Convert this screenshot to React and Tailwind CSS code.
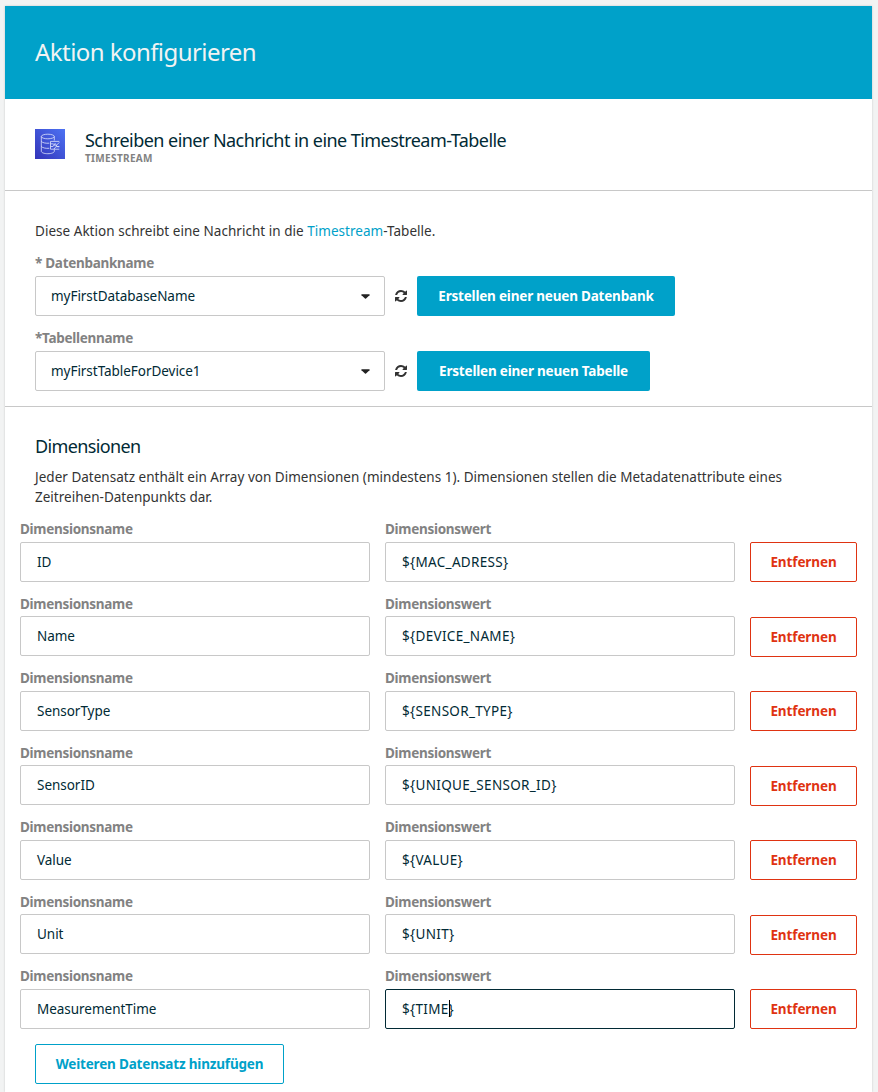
const dimensions = [
  ["ID", "${MAC_ADRESS}"],
  ["Name", "${DEVICE_NAME}"],
  ["SensorType", "${SENSOR_TYPE}"],
  ["SensorID", "${UNIQUE_SENSOR_ID}"],
  ["Value", "${VALUE}"],
  ["Unit", "${UNIT}"],
  ["MeasurementTime", "${TIME}"],
];

function TimestreamIcon() {
  return (
    <svg className="size-[30px] shrink-0" viewBox="0 0 30 30" fill="none" stroke="#dfe4fb" strokeWidth="0.8">
      <defs>
        <linearGradient id="ts" x1="0" y1="1" x2="1" y2="0">
          <stop offset="0" stopColor="#3334b9" />
          <stop offset="1" stopColor="#4d72f3" />
        </linearGradient>
      </defs>
      <rect width="30" height="30" fill="url(#ts)" stroke="none" />
      <ellipse cx="12.8" cy="7.5" rx="6.5" ry="2.3" />
      <path d="M6.3 7.5v14.7c0 1.5 2.9 2.5 6.5 2.5s6.5-1 6.5-2.5v-1.7M19.3 7.5v4" />
      <path d="M6.3 12.3c1 1.5 4.5 2.2 8 1.9M6.3 17.3c1 1.6 4.5 2.3 8 2" />
      <path d="M24.3 12.4h-8.8v7.8h8.8M15.5 14.8l3 .1 2 2.3 3.8-3.8M15.5 17.6l2.6-.2 2-3 2 3.2 2.2.2M19 20l2-2.3 3.3-.2" />
    </svg>
  );
}

function RefreshIcon() {
  return (
    <svg className="mx-[10px] size-3 text-[#333]" viewBox="0 0 1536 1536" fill="currentColor">
      <path d="M1511 928q0 5-1 7-64 268-268 434.5t-478 166.5q-146 0-282.5-55t-243.5-157l-129 129q-19 19-45 19t-45-19-19-45v-448q0-26 19-45t45-19h448q26 0 45 19t19 45-19 45l-137 137q71 66 161 102t187 36q134 0 250-65t186-179q11-17 53-117 8-23 30-23h192q13 0 22.5 9.5t9.5 22.5zm25-800v448q0 26-19 45t-45 19h-448q-26 0-45-19t-19-45 19-45l138-138q-148-137-349-137-134 0-250 65t-186 179q-11 17-53 117-8 23-30 23h-199q-13 0-22.5-9.5t-9.5-22.5v-7q65-268 270-434.5t480-166.5q146 0 284 55.5t245 156.5l130-129q19-19 45-19t45 19 19 45z" />
    </svg>
  );
}

function CaretIcon() {
  return (
    <svg className="h-[5px] w-[9px] text-[#222]" viewBox="0 0 9 5" fill="currentColor">
      <path d="M0.8 0.3h7.4q.8.2.3.9L5 4.5q-.5.4-1 0L.5 1.2Q0 .5.8.3z" />
    </svg>
  );
}

function Label({ children }) {
  return (
    <div className="h-5 text-[13.5px] leading-5 font-bold tracking-[-0.29px] text-[#828282] whitespace-pre">{children}</div>
  );
}

function SelectRow({ label, value, action, actionClass }) {
  return (
    <div>
      <Label>{label}</Label>
      <div className="mt-[3px] flex items-center">
        <div className="flex h-10 w-[350px] items-center justify-between rounded-[2px] border border-[#c8c8c8] pr-[14px] pl-[15px] text-[13.5px] tracking-[-0.04px] text-[#012a35]">
          <span>{value}</span>
          <CaretIcon />
        </div>
        <RefreshIcon />
        <button
          className={
            "h-10 rounded-[2px] bg-[#00a1c9] text-[13.5px] font-bold tracking-[-0.2px] text-white whitespace-nowrap " + actionClass
          }
        >
          {action}
        </button>
      </div>
    </div>
  );
}

function Field({ label, value, textClass, focused }) {
  return (
    <div className="w-[350px]">
      <Label>{label}</Label>
      <div
        className={
          "mt-[2.9px] flex h-10 items-center rounded-[2px] border pl-4 text-[13.5px] text-[#012a35] " +
          textClass +
          (focused ? " border-[#012a35]" : " border-[#c8c8c8]")
        }
      >
        {focused ? (
          <span className="relative">
            {value}
            <span className="absolute top-[1px] right-[4px] h-[17px] w-px bg-black" />
          </span>
        ) : (
          value
        )}
      </div>
    </div>
  );
}

export default function App() {
  return (
    <div className="h-[1092px] w-[878px] overflow-hidden bg-[#f2f3f3] pt-[6px] pl-[5px] font-['Noto_Sans','Open_Sans',sans-serif] text-[#333]">
      <main className="h-[1086px] w-[867px] bg-white shadow-[0_0_2px_rgba(0,0,0,0.18)]">
        <header className="flex h-[93px] items-center bg-[#00a1c9] px-[30px] pb-0.5">
          <h1 className="text-[24px] tracking-[-0.56px] text-[#f2f3f3]">Aktion konfigurieren</h1>
        </header>
        <section className="flex h-[92px] border-b border-[#c8c8c8] px-[30px] pt-[30px]">
          <TimestreamIcon />
          <div className="pl-5">
            <h2 className="text-[18px] leading-[22px] tracking-[-0.55px] text-[#012a35]">
              Schreiben einer Nachricht in eine Timestream-Tabelle
            </h2>
            <div className="text-[10px] leading-[14px] font-bold tracking-[0.34px] text-[#828282]">TIMESTREAM</div>
          </div>
        </section>
        <section className="h-[216px] border-b border-[#c8c8c8] px-[30px] pt-[30px]">
          <p className="mb-3 text-[13.5px] leading-5 tracking-[0.03px]">
            Diese Aktion schreibt eine Nachricht in die <a className="text-[#00a1c9]">Timestream</a>-Tabelle.
          </p>
          <div className="flex flex-col gap-3">
            <SelectRow label="* Datenbankname" value="myFirstDatabaseName" action="Erstellen einer neuen Datenbank" actionClass="w-[258px]" />
            <SelectRow label="*Tabellenname" value="myFirstTableForDevice1" action="Erstellen einer neuen Tabelle" actionClass="w-[233px]" />
          </div>
        </section>
        <section className="pt-7">
          <div className="px-[30px]">
            <h3 className="text-[18px] leading-[22px] tracking-[-0.62px] text-[#012a35]">Dimensionen</h3>
            <p className="mt-[10px] text-[13.5px] leading-5 tracking-[0.015px]">
              Jeder Datensatz enthält ein Array von Dimensionen (mindestens 1). Dimensionen stellen die Metadatenattribute eines
              <br />
              Zeitreihen-Datenpunkts dar.
            </p>
          </div>
          <div className="mt-3 px-[15px]">
            {dimensions.map(([name, value], i) => (
              <div key={name} className="flex h-[74.5px] gap-[15px]">
                <Field label="Dimensionsname" value={name} textClass="tracking-[-0.03px]" />
                <Field label="Dimensionswert" value={value} textClass="tracking-[0.32px]" focused={i === 6} />
                <button className="mt-[23px] h-10 w-[107px] rounded-[2px] border border-[#df3312] pt-px text-[13.5px] font-bold tracking-[-0.1px] text-[#df3312]">
                  Entfernen
                </button>
              </div>
            ))}
          </div>
          <div className="mt-[3.5px] px-[30px]">
            <button className="h-10 w-[249px] rounded-[2px] border border-[#00a1c9] text-[13.5px] font-bold tracking-[-0.18px] whitespace-nowrap text-[#00a1c9]">
              Weiteren Datensatz hinzufügen
            </button>
          </div>
        </section>
      </main>
    </div>
  );
}
